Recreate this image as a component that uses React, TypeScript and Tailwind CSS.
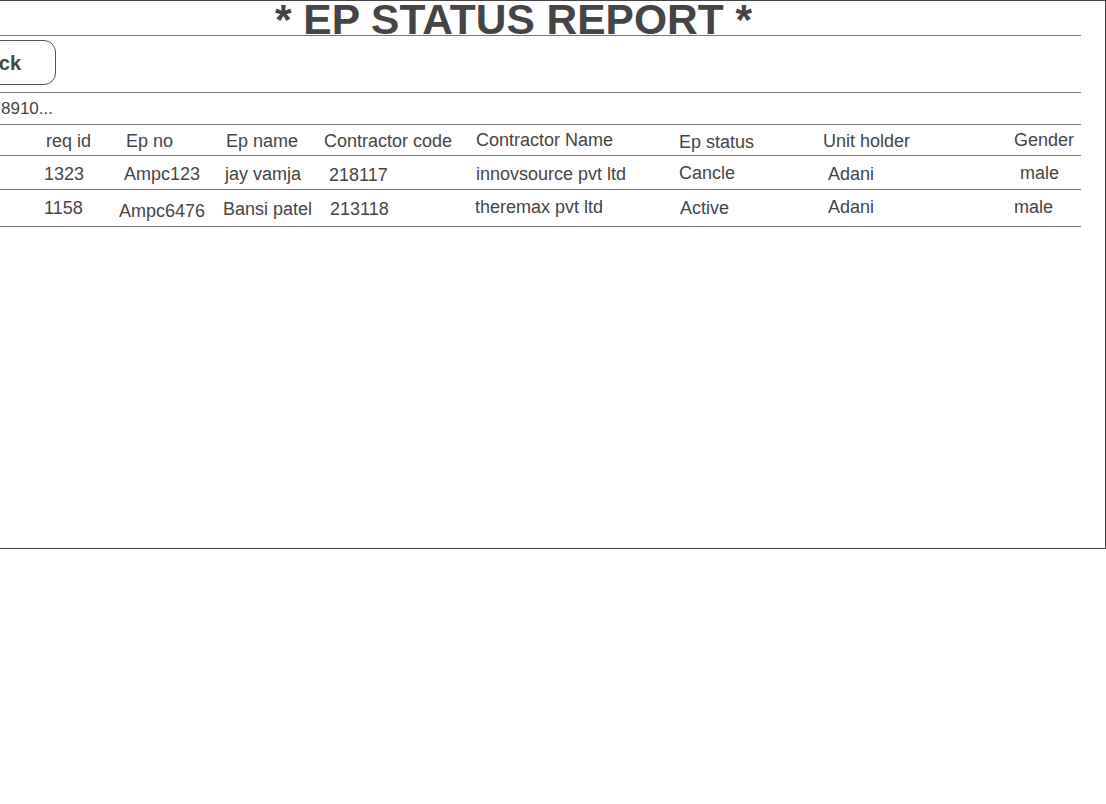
import React from 'react';

interface Cell {
  text: string;
  cls: string;
}

// column offsets and small vertical nudges copied from the wireframe
const header: Cell[] = [
  { text: '', cls: '' },
  { text: 'req id', cls: 'pl-[5px] pt-[6px]' },
  { text: 'Ep no', cls: 'pl-[10px] pt-[6px]' },
  { text: 'Ep name', cls: 'pl-[7px] pt-[6px]' },
  { text: 'Contractor code', cls: 'pl-[3px] pt-[6px]' },
  { text: 'Contractor Name', cls: 'pl-[5px] pt-[5px]' },
  { text: 'Ep status', cls: 'pl-[6px] pt-[7px]' },
  { text: 'Unit holder', cls: 'pl-[4px] pt-[6px]' },
  { text: 'Gender', cls: 'pl-[5px] pt-[5px]' },
];

const rows: { h: string; cells: Cell[] }[] = [
  {
    h: 'h-[34px]',
    cells: [
      { text: '', cls: '' },
      { text: '1323', cls: 'pl-[3px] pt-[8px]' },
      { text: 'Ampc123', cls: 'pl-[8px] pt-[8px]' },
      { text: 'jay vamja', cls: 'pl-[6px] pt-[8px]' },
      { text: '218117', cls: 'pl-[8px] pt-[9px]' },
      { text: 'innovsource pvt ltd', cls: 'pl-[5px] pt-[8px]' },
      { text: 'Cancle', cls: 'pl-[6px] pt-[7px]' },
      { text: 'Adani', cls: 'pl-[9px] pt-[8px]' },
      { text: 'male', cls: 'pl-[11px] pt-[7px]' },
    ],
  },
  {
    h: 'h-[37px]',
    cells: [
      { text: '', cls: '' },
      { text: '1158', cls: 'pl-[3px] pt-[8px]' },
      { text: 'Ampc6476', cls: 'pl-[3px] pt-[11px]' },
      { text: 'Bansi patel', cls: 'pl-[4px] pt-[9px]' },
      { text: '213118', cls: 'pl-[9px] pt-[9px]' },
      { text: 'theremax pvt ltd', cls: 'pl-[4px] pt-[7px]' },
      { text: 'Active', cls: 'pl-[7px] pt-[8px]' },
      { text: 'Adani', cls: 'pl-[9px] pt-[7px]' },
      { text: 'male', cls: 'pl-[5px] pt-[7px]' },
    ],
  },
];

const cols = 'grid grid-cols-[95px_75px_103px_102px_150px_202px_146px_190px_72px]';

export default function App() {
  return (
    <div className="w-[1106px] h-[804px] overflow-hidden bg-white font-['Liberation_Sans',Arial,sans-serif] text-[#454545]">
      {/* frame, left edge runs off the page */}
      <div className="-ml-[75px] w-[1181px] h-[549px] border border-[#444] pl-[20px] pr-[24px]">
        {/* Title */}
        <div className="h-[35px] border-b border-[#777] text-center text-[42.5px] font-bold leading-[38px] whitespace-nowrap">
          * EP STATUS REPORT *
        </div>

        {/* Back button */}
        <div className="h-[57px] border-b border-[#777] pt-[4px]">
          <button className="w-[110px] h-[45px] rounded-[12px] border border-[#555] flex items-center justify-end pr-[34px] text-[20px] font-bold text-[#454545]">
            Back
          </button>
        </div>

        {/* Mobile no */}
        <div className="h-[32px] border-b border-[#777] flex items-center">
          <div className="w-[107px] flex justify-end">
            <span className="whitespace-nowrap text-[17px]">Mobile no : 12345678910...</span>
          </div>
        </div>

        {/* Table */}
        <div className={`${cols} h-[31px] border-b border-[#777] text-[18px] leading-5`}>
          {header.map((c, i) => (
            <div key={i} className={`whitespace-nowrap ${c.cls}`}>
              {c.text}
            </div>
          ))}
        </div>
        {rows.map((r, ri) => (
          <div key={ri} className={`${cols} ${r.h} border-b border-[#777] text-[18px] leading-5`}>
            {r.cells.map((c, i) => (
              <div key={i} className={`whitespace-nowrap ${c.cls}`}>
                {c.text}
              </div>
            ))}
          </div>
        ))}
      </div>
    </div>
  );
}
